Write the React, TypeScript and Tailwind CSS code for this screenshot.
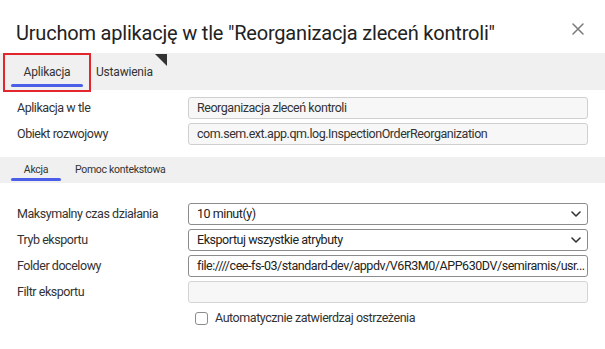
import React from "react";

function Chevron() {
  return (
    <svg width="10" height="6" viewBox="0 0 10 6" className="shrink-0">
      <path d="M1 1l4 4 4-4" fill="none" stroke="#333" strokeWidth="1.6" strokeLinecap="round" strokeLinejoin="round" />
    </svg>
  );
}

function Row({ label, children }: { label: string; children: React.ReactNode }) {
  return (
    <div className="flex items-center h-[22px]">
      <div className="w-[188px] pl-[17px] text-[12.5px] tracking-[-0.45px] text-[#333]">{label}</div>
      {children}
    </div>
  );
}

function ReadOnly({ value }: { value: string }) {
  return (
    <div className="w-[400px] h-[22px] rounded-[3px] border border-[#cfcfcf] bg-[#f7f7f7] pl-[8px] flex items-center text-[12.5px] tracking-[-0.45px] text-[#333] whitespace-nowrap overflow-hidden">
      {value}
    </div>
  );
}

function Select({ value }: { value: string }) {
  return (
    <div className="w-[400px] h-[22px] rounded-[3px] border border-[#8c8c8c] bg-white pl-[8px] pr-[6px] flex items-center justify-between text-[12.5px] tracking-[-0.45px] text-[#222]">
      <span>{value}</span>
      <Chevron />
    </div>
  );
}

export default function App() {
  return (
    <div className="w-[605px] h-[349px] bg-white overflow-hidden" style={{ fontFamily: "Roboto, 'Liberation Sans', sans-serif" }}>
      {/* Header */}
      <div className="h-[53px] flex items-start justify-between pl-[16px] pr-[21px] pt-[21px]">
        <div className="text-[20px] leading-[24px] tracking-[-0.2px] text-[#222] whitespace-nowrap">
          Uruchom aplikację w tle "Reorganizacja zleceń kontroli"
        </div>
        <svg width="12" height="12" viewBox="0 0 12 12" className="mt-[2px]">
          <path d="M1 1l10 10M11 1L1 11" stroke="#7a7a7a" strokeWidth="1.5" strokeLinecap="round" />
        </svg>
      </div>

      {/* Main tabs */}
      <div className="relative h-[37px] bg-[#f0f0f0] flex items-stretch text-[12px] tracking-[-0.2px] text-[#333]">
        <div className="relative ml-[11px] w-[72px] flex items-center justify-center">
          <span>Aplikacja</span>
          <div className="absolute left-0 right-0 bottom-[3px] h-[3px] rounded-full bg-[#4a5ee8]" />
        </div>
        <div className="relative ml-[13px] pr-[14px] flex items-center">
          <span>Ustawienia</span>
          <svg width="12" height="12" viewBox="0 0 12 12" className="absolute right-0 top-[1px]">
            <path d="M0 0H12V12Z" fill="#333" />
          </svg>
        </div>
        <div className="absolute left-[3px] top-0 w-[88px] h-[39px] border-2 border-[#e3262d]" />
      </div>

      {/* Section 1 */}
      <div className="mt-[7px] flex flex-col gap-[4px]">
        <Row label="Aplikacja w tle">
          <ReadOnly value="Reorganizacja zleceń kontroli" />
        </Row>
        <Row label="Obiekt rozwojowy">
          <ReadOnly value="com.sem.ext.app.qm.log.InspectionOrderReorganization" />
        </Row>
      </div>

      {/* Sub tabs */}
      <div className="mt-[12px] h-[26px] bg-[#f0f0f0] flex items-stretch text-[10.5px] tracking-[-0.3px] text-[#333]">
        <div className="relative ml-[11px] w-[50px] flex items-center justify-center">
          <span>Akcja</span>
          <div className="absolute left-0 right-0 bottom-[2px] h-[3px] rounded-full bg-[#4a5ee8]" />
        </div>
        <div className="ml-[14px] flex items-center">
          <span>Pomoc kontekstowa</span>
        </div>
      </div>

      {/* Section 2 */}
      <div className="mt-[20px] flex flex-col gap-[4px]">
        <Row label="Maksymalny czas działania">
          <Select value="10 minut(y)" />
        </Row>
        <Row label="Tryb eksportu">
          <Select value="Eksportuj wszystkie atrybuty" />
        </Row>
        <Row label="Folder docelowy">
          <div className="w-[400px] h-[22px] rounded-[3px] border border-[#8c8c8c] bg-white pl-[8px] pr-[4px] flex items-center text-[12.5px] tracking-[-0.45px] text-[#222] whitespace-nowrap overflow-hidden">
            file:////cee-fs-03/standard-dev/appdv/V6R3M0/APP630DV/semiramis/usr...
          </div>
        </Row>
        <Row label="Filtr eksportu">
          <div className="w-[400px] h-[22px] rounded-[3px] border border-[#d4d4d4] bg-[#f7f7f7]" />
        </Row>
      </div>

      <div className="mt-[8px] ml-[195px] flex items-center gap-[7px] h-[14px]">
        <div className="w-[13px] h-[13px] rounded-[3px] border border-[#8c8c8c] bg-white" />
        <span className="text-[12.5px] tracking-[-0.45px] text-[#333]">Automatycznie zatwierdzaj ostrzeżenia</span>
      </div>
    </div>
  );
}
